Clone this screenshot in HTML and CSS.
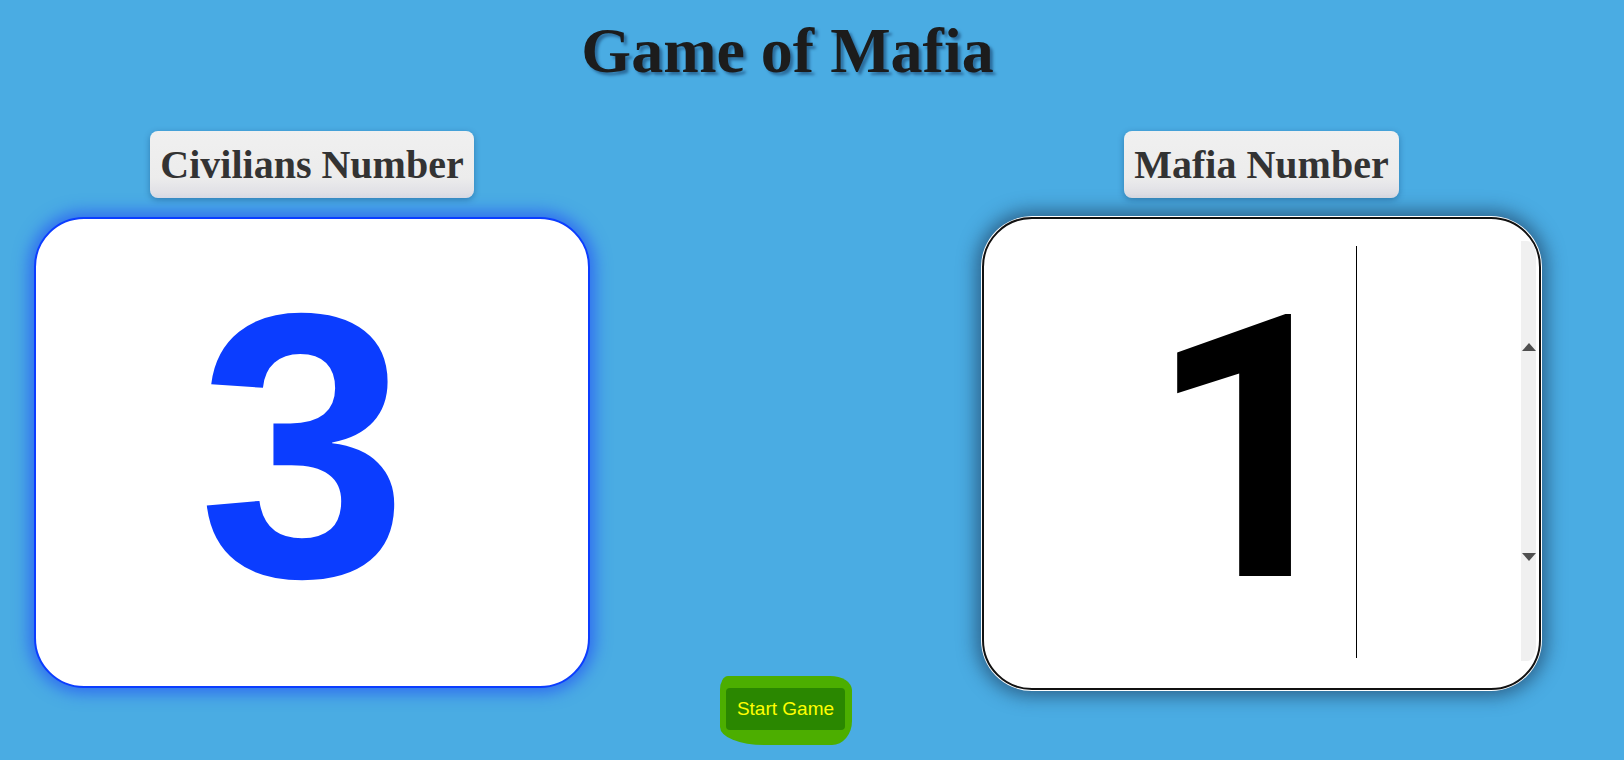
FILE: index.html
```html
<!DOCTYPE html>
<html lang="en">
<head>
<meta charset="utf-8">
<title>Game of Mafia</title>
<link rel="stylesheet" href="styles.css">
</head>
<body>
<div class="app">
  <h1 class="title">Game of Mafia</h1>
  <div class="board">
    <div class="column column-left">
      <div class="label">Civilians Number</div>
      <div class="card card-civ">
        <div class="value"><span class="digit digit-blue">3</span></div>
        <div class="spin spin-hidden"></div>
      </div>
    </div>
    <div class="start-wrap">
      <div class="start-blob">
        <button class="start-btn">Start Game</button>
      </div>
    </div>
    <div class="column column-right">
      <div class="label">Mafia Number</div>
      <div class="card card-mafia">
        <div class="value"><span class="digit digit-black">1<span class="caret"></span></span></div>
        <div class="spin">
          <span class="arrow arrow-up"></span>
          <span class="arrow arrow-down"></span>
        </div>
      </div>
    </div>
  </div>
</div>
</body>
</html>
```
FILE: styles.css
```css
html, body {
  margin: 0;
  padding: 0;
}
body {
  background: #4aace3;
  width: 1624px;
  height: 760px;
  overflow: hidden;
  font-family: "Liberation Serif", "Times New Roman", serif;
}
.app {
  width: 1507px;
  margin-left: 34px;
  padding-top: 14px;
}
.title {
  margin: 0 0 43px;
  text-align: center;
  font-size: 64px;
  font-weight: bold;
  line-height: normal;
  color: #1c1c1c;
  text-shadow: 3px 3px 3px #2b6c9c;
}
.board {
  display: flex;
  justify-content: space-between;
  align-items: flex-start;
}
.column {
  display: flex;
  flex-direction: column;
  align-items: center;
  gap: 19px;
}
.column-left { width: 556px; }
.column-right { width: 559px; }
.label {
  font-family: "Liberation Serif", "Times New Roman", serif;
  font-weight: bold;
  font-size: 40px;
  line-height: normal;
  color: #333;
  padding: 10px 10px;
  border-radius: 8px;
  background: linear-gradient(to bottom, #f0f0f0 0%, #ececec 70%, #dcdce4 100%);
  box-shadow: 0 2px 6px rgba(0, 40, 90, 0.35);
}
.card {
  box-sizing: border-box;
  display: flex;
  background: #fff;
  border-radius: 50px;
  font-weight: bold;
}
.card-civ {
  width: 556px;
  height: 471px;
  border: 2px solid #0b3dff;
  box-shadow: 0 0 16px 5px #2f6cf0;
}
.card-mafia {
  width: 559px;
  height: 473px;
  border: 2px solid #111;
  box-shadow: 0 0 0 1px #fff, 0 0 18px 6px rgba(20, 40, 70, 0.55);
}
.value {
  flex: 1;
  display: flex;
  align-items: center;
  justify-content: center;
}
.digit {
  position: relative;
  line-height: 1;
}
.digit-blue {
  font-family: "Liberation Sans", Arial, sans-serif;
  font-size: 377px;
  color: #0b3dff;
  margin-bottom: 14px;
}
.digit-black {
  font-family: Roboto, "Liberation Sans", Arial, sans-serif;
  font-size: 368px;
  color: #000;
  margin-bottom: 5px;
}
.caret {
  position: absolute;
  right: 1px;
  top: -21px;
  width: 1px;
  height: 412px;
  background: #000;
}
.spin {
  position: relative;
  width: 15px;
  margin: 22px 3px 27px 0;
  background: #f0f0f0;
  border-radius: 0 9px 9px 0 / 0 14px 14px 0;
}
.spin-hidden {
  background: transparent;
}
.arrow {
  position: absolute;
  left: 1px;
  width: 0;
  height: 0;
  border-left: 7px solid transparent;
  border-right: 7px solid transparent;
}
.arrow-up {
  top: 102px;
  border-bottom: 8px solid #4f4f4f;
}
.arrow-down {
  top: 312px;
  border-top: 8px solid #4f4f4f;
}
.start-wrap {
  margin-top: 545px;
}
.start-blob {
  width: 132px;
  height: 69px;
  box-sizing: border-box;
  padding: 12px 0 0 6px;
  background: #4cae00;
  border-radius: 8px 22px 20px 44px / 14px 14px 24px 18px;
}
.start-btn {
  display: block;
  width: 119px;
  height: 42px;
  padding: 0;
  border: none;
  border-radius: 4px;
  background: #2a8700;
  color: #ffff00;
  font-family: "Liberation Sans", Arial, sans-serif;
  font-size: 19px;
  line-height: 42px;
  text-align: center;
}
```
